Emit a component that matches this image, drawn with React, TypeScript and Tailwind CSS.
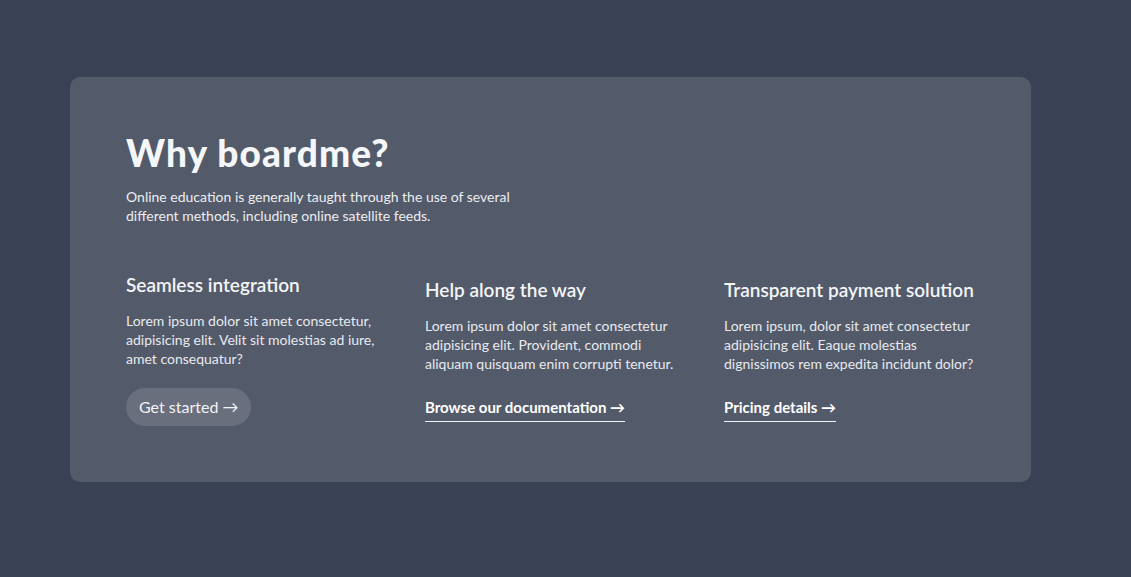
import React from 'react';

const features = [
  {
    title: 'Seamless integration',
    body: ['Lorem ipsum dolor sit amet consectetur,', 'adipisicing elit. Velit sit molestias ad iure,', 'amet consequatur?'],
    cta: 'Get started →',
    kind: 'button',
  },
  {
    title: 'Help along the way',
    body: ['Lorem ipsum dolor sit amet consectetur', 'adipisicing elit. Provident, commodi', 'aliquam quisquam enim corrupti tenetur.'],
    cta: 'Browse our documentation →',
    kind: 'link',
  },
  {
    title: 'Transparent payment solution',
    body: ['Lorem ipsum, dolor sit amet consectetur', 'adipisicing elit. Eaque molestias', 'dignissimos rem expedita incidunt dolor?'],
    cta: 'Pricing details →',
    kind: 'link',
  },
];

const App: React.FC = () => {
  return (
    <div
      className="min-h-screen bg-[#394254] text-gray-100 pt-[77px] pl-[70px]"
      style={{ fontFamily: 'Lato, "Noto Sans", sans-serif' }}
    >
      <section className="w-[961px] h-[405px] rounded-[10px] bg-[#535a6a] p-14">
        <h2 className="text-[37px] leading-10 font-black tracking-[0.03em] text-[#f5f6f8]">Why boardme?</h2>
        <p className="mt-3.5 text-[14px] leading-[19px] text-[#eceef1]">
          Online education is generally taught through the use of several
          <br />
          different methods, including online satellite feeds.
        </p>

        <div className="mt-[46px] grid grid-cols-3 gap-12">
          {features.map((f) => (
            <div key={f.title} className={f.kind === 'link' ? 'pt-[5px]' : ''}>
              <h3 className="text-[19px] leading-7 font-semibold text-[#f3f4f6]">{f.title}</h3>
              <p className="mt-3 text-[14px] leading-[19px] text-[#e8eaee]">
                {f.body.map((line, i) => (
                  <React.Fragment key={i}>
                    {line}
                    {i < f.body.length - 1 && <br />}
                  </React.Fragment>
                ))}
              </p>
              {f.kind === 'button' ? (
                <button className="mt-5 h-[38px] rounded-full bg-[#696f7d] px-[13px] text-[16px] text-[#f3f4f6]">
                  {f.cta}
                </button>
              ) : (
                <a href="#" className="mt-6 inline-block border-b border-[#f3f4f6] pb-1 text-[15px] leading-5 font-bold text-white">
                  {f.cta}
                </a>
              )}
            </div>
          ))}
        </div>
      </section>
    </div>
  );
};

export default App;
